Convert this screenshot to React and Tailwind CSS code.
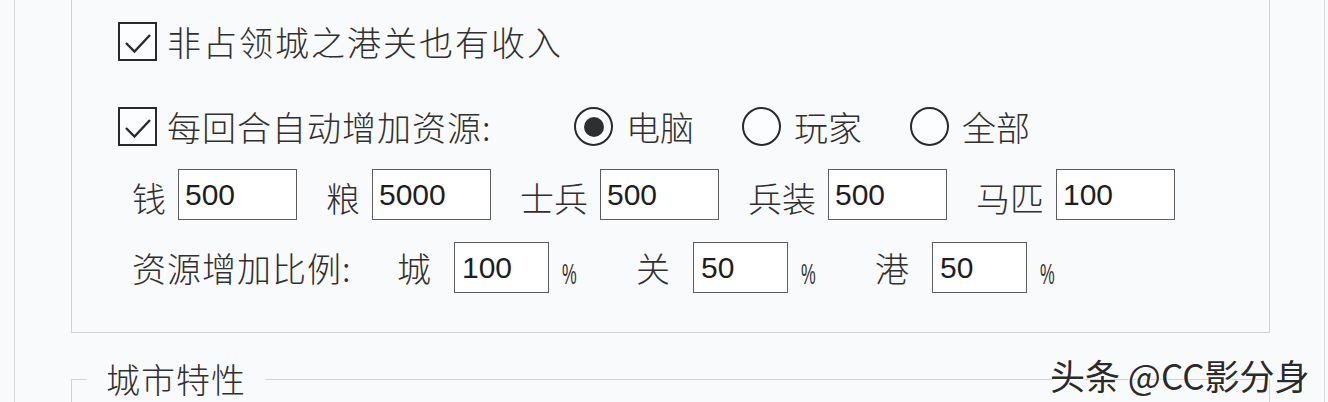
import React from 'react'

function Check() {
  return (
    <span className="w-[39px] h-[39px] border-2 border-[#2a2a2a] bg-[#fcfdfe] flex items-center justify-center shrink-0">
      <svg width="35" height="35" viewBox="0 0 35 35">
        <path d="M6 19 L14.5 27.5 L30 11" fill="none" stroke="#2a2a2a" strokeWidth="2.4" />
      </svg>
    </span>
  )
}

function Radio({ on, label }) {
  return (
    <div className="flex items-center w-[168px] shrink-0">
      <span className="w-[39px] h-[39px] rounded-full border-2 border-[#2a2a2a] bg-[#fcfdfe] flex items-center justify-center shrink-0">
        {on && <span className="w-[20px] h-[20px] rounded-full bg-[#2f2f2f]" />}
      </span>
      <span className="ml-[13px]">{label}</span>
    </div>
  )
}

function Field({ label, value }) {
  return (
    <div className="flex items-center mr-[29px]">
      <span className="translate-y-[3px]">{label}</span>
      <input
        readOnly
        value={value}
        className="ml-[12px] w-[119px] h-[51px] border border-[#5c5c5c] bg-white pl-[6px] text-[30px] text-[#1e1e1e] font-['Liberation_Sans',sans-serif] outline-none"
      />
    </div>
  )
}

function Rate({ label, value }) {
  return (
    <div className="flex items-center mr-[58px]">
      <span className="w-[34px]">{label}</span>
      <input
        readOnly
        value={value}
        className="ml-[23px] w-[95px] h-[51px] border border-[#5c5c5c] bg-white pl-[7px] text-[30px] text-[#1e1e1e] font-['Liberation_Sans',sans-serif] outline-none"
      />
      <span className="ml-[13px] w-[16px] inline-block text-[30px] leading-[30px] scale-x-[0.55] origin-left translate-y-[6px] font-['Liberation_Sans',sans-serif]">%</span>
    </div>
  )
}

export default function App() {
  return (
    <div className="relative w-[1328px] h-[402px] overflow-hidden bg-[#f9fafc] text-[#303030] text-[34px] leading-[40px] font-light font-['Noto_Sans_CJK_SC',sans-serif]">
      <div className="ml-[14px] w-[1311px] h-full border-x border-[#d9dce0]">
        <div className="ml-[56px] w-[1199px]">
          {/* 上一组（顶部在画面外） */}
          <div className="h-[333px] border-x border-b border-[#cfd3d8] pt-[22px]">
            <div className="flex items-center h-[39px] pl-[46px]">
              <Check />
              <span className="ml-[10px] tracking-[2px]">非占领城之港关也有收入</span>
            </div>

            <div className="flex items-center h-[39px] pl-[46px] mt-[46px]">
              <Check />
              <span className="ml-[10px] w-[407px] tracking-[1px]">每回合自动增加资源:</span>
              <Radio on label="电脑" />
              <Radio label="玩家" />
              <Radio label="全部" />
            </div>

            <div className="flex items-center h-[51px] pl-[60px] mt-[23px]">
              <Field label="钱" value="500" />
              <Field label="粮" value="5000" />
              <Field label="士兵" value="500" />
              <Field label="兵装" value="500" />
              <Field label="马匹" value="100" />
            </div>

            <div className="flex items-center h-[51px] pl-[60px] mt-[22px]">
              <span className="w-[265px] tracking-[1px]">资源增加比例:</span>
              <Rate label="城" value="100" />
              <Rate label="关" value="50" />
              <Rate label="港" value="50" />
            </div>
          </div>

          <fieldset className="mt-[26px] h-[200px] border border-[#cfd3d8]">
            <legend className="ml-[14px] px-[20px] leading-[40px] tracking-[1px]">城市特性</legend>
          </fieldset>
        </div>
      </div>

      <div className="absolute left-[1050px] top-[353px] text-[35px] leading-[44px] font-normal text-[#2a2a2a] [text-shadow:1px_1px_0_#fff,-1px_0_0_#fff]">
        头条 @CC影分身
      </div>
    </div>
  )
}
